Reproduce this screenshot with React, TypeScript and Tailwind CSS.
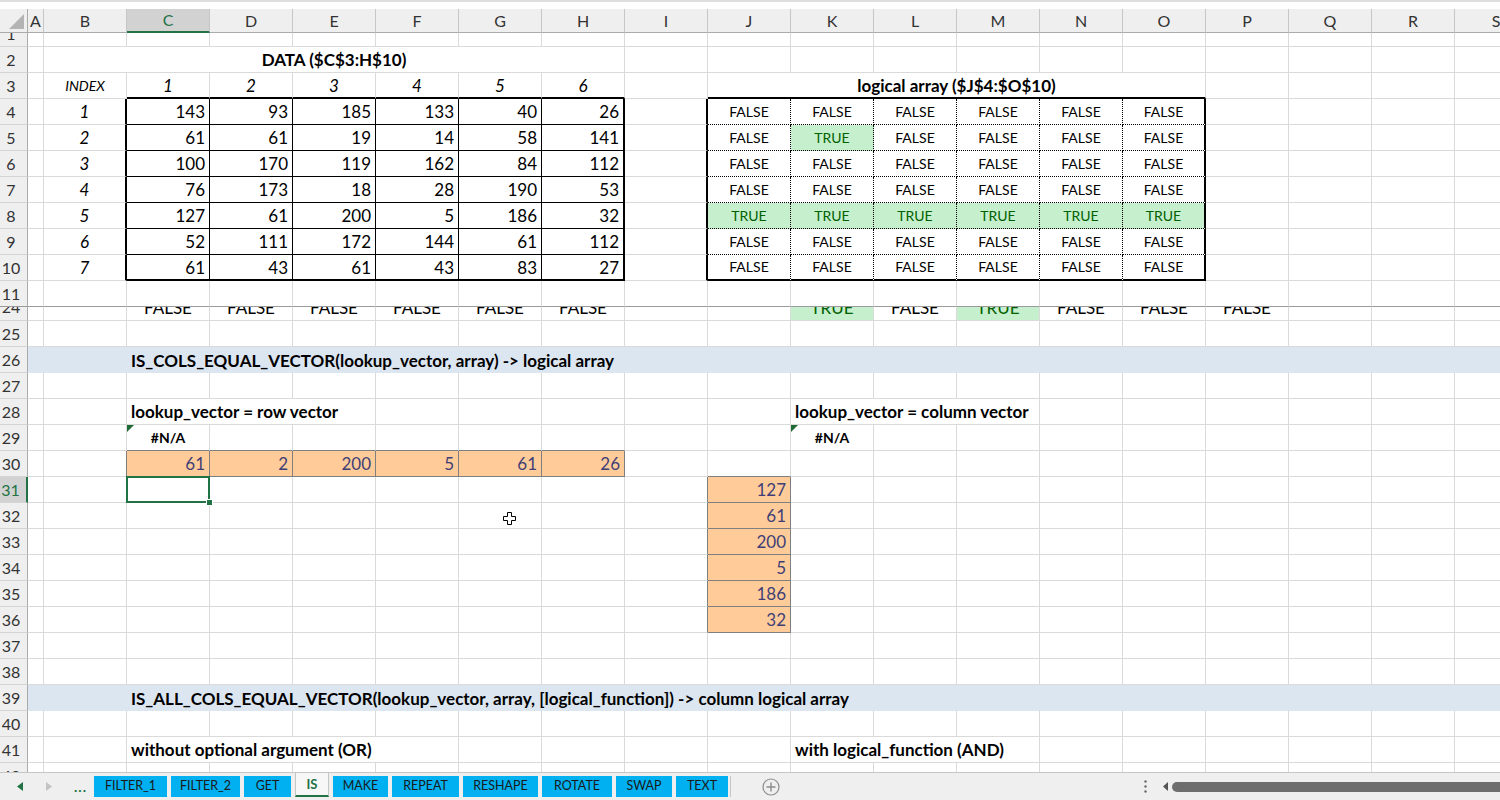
import type { ReactNode } from "react";
import { twMerge } from "tailwind-merge";

const COLS = ["A", "B", "C", "D", "E", "F", "G", "H", "I", "J", "K", "L", "M", "N", "O", "P", "Q", "R", "S"];

const WIDTH: Record<number, string> = {
  16: "w-[16px]",
  83: "w-[83px]",
  249: "w-[249px]",
  332: "w-[332px]",
  498: "w-[498px]",
  581: "w-[581px]",
};

const DATA_COLS = ["C", "D", "E", "F", "G", "H"];
const LOGIC_COLS = ["J", "K", "L", "M", "N", "O"];

const DATA = [
  [143, 93, 185, 133, 40, 26],
  [61, 61, 19, 14, 58, 141],
  [100, 170, 119, 162, 84, 112],
  [76, 173, 18, 28, 190, 53],
  [127, 61, 200, 5, 186, 32],
  [52, 111, 172, 144, 61, 112],
  [61, 43, 61, 43, 83, 27],
];

const COLUMN_VECTOR: Record<number, number> = { 31: 127, 32: 61, 33: 200, 34: 5, 35: 186, 36: 32 };
const ROW_VECTOR = [61, 2, 200, 5, 61, 26];

const BANDS: Record<number, string> = {
  26: "IS_COLS_EQUAL_VECTOR(lookup_vector, array) -> logical array",
  39: "IS_ALL_COLS_EQUAL_VECTOR(lookup_vector, array, [logical_function]) -> column logical array",
};

const ROWS = [1, 2, 3, 4, 5, 6, 7, 8, 9, 10, 11, 24, 25, 26, 27, 28, 29, 30, 31, 32, 33, 34, 35, 36, 37, 38, 39, 40, 41, 42];

type Cell = { v?: ReactNode; span?: number; box?: string; tx?: string; over?: ReactNode };

const INPUT_BOX = "bg-[#ffcc99] border-r-[#7f7f7f] border-b-[#7f7f7f]";
const INPUT_TX = "justify-end text-[#3f3f76]";

function ErrorMark() {
  return (
    <svg className="absolute left-0 top-0" width="7" height="7" viewBox="0 0 7 7" aria-hidden="true">
      <polygon points="0,0 7,0 0,7" fill="#1d6a36" />
    </svg>
  );
}

function buildRow(n: number): Record<string, Cell> {
  const r: Record<string, Cell> = {};

  if (n === 2) r.B = { span: 7, v: "DATA ($C$3:H$10)", tx: "justify-center font-bold" };

  if (n === 3) {
    r.B = { v: "INDEX", tx: "justify-center italic text-[14px]" };
    DATA_COLS.forEach((c, i) => {
      r[c] = { v: i + 1, box: "border-b-2 border-b-black", tx: "justify-center italic" };
    });
    r.J = {
      span: 6,
      v: "logical array ($J$4:$O$10)",
      box: "border-b-2 border-b-black",
      tx: "justify-center font-bold",
    };
  }

  if (n >= 4 && n <= 10) {
    const k = n - 4;
    const last = n === 10;
    r.B = { v: k + 1, box: "border-r-2 border-r-black", tx: "justify-center italic" };
    DATA_COLS.forEach((c, i) => {
      r[c] = {
        v: DATA[k][i],
        box: twMerge("border-r-black border-b-black", i === 5 && "border-r-2", last && "border-b-2"),
        tx: "justify-end",
      };
    });
    r.I = { box: "border-r-2 border-r-black" };
    LOGIC_COLS.forEach((c, i) => {
      const t = n === 8 || (n === 5 && c === "K");
      r[c] = {
        v: t ? "TRUE" : "FALSE",
        box: twMerge(
          "border-r-black border-b-black",
          i === 5 ? "border-r-2" : "[border-right-style:dotted]!",
          last ? "border-b-2" : "[border-bottom-style:dotted]!",
          t && "bg-[#c6efce]",
        ),
        tx: twMerge("justify-center text-[14px]", t && "text-[#006100]"),
      };
    });
  }

  if (n === 24) {
    DATA_COLS.forEach((c) => (r[c] = { v: "FALSE", tx: "justify-center" }));
    ["K", "L", "M", "N", "O", "P"].forEach((c) => {
      const t = c === "K" || c === "M";
      r[c] = {
        v: t ? "TRUE" : "FALSE",
        box: t ? "bg-[#c6efce]" : undefined,
        tx: twMerge("justify-center", t && "text-[#006100]"),
      };
    });
  }

  if (n === 28) {
    r.C = { span: 3, v: "lookup_vector = row vector", tx: "font-bold" };
    r.K = { span: 3, v: "lookup_vector = column vector", tx: "font-bold" };
  }

  if (n === 29) {
    DATA_COLS.forEach((c) => (r[c] = { box: "border-b-[#7f7f7f]" }));
    r.C = { v: "#N/A", box: "border-b-[#7f7f7f]", tx: "justify-center font-bold text-[14px]", over: <ErrorMark /> };
    r.K = { v: "#N/A", tx: "justify-center font-bold text-[14px]", over: <ErrorMark /> };
  }

  if (n === 30) {
    r.B = { box: "border-r-[#7f7f7f]" };
    DATA_COLS.forEach((c, i) => (r[c] = { v: ROW_VECTOR[i], box: INPUT_BOX, tx: INPUT_TX }));
    r.J = { box: "border-b-[#7f7f7f]" };
  }

  if (COLUMN_VECTOR[n] !== undefined) {
    r.I = { box: "border-r-[#7f7f7f]" };
    r.J = { v: COLUMN_VECTOR[n], box: INPUT_BOX, tx: INPUT_TX };
  }

  if (n === 31) {
    r.C = {
      over: (
        <div className="absolute left-[-1px] top-[-1px] right-[-1px] bottom-[-1px] z-10 border-2 border-[#217346]">
          <div className="absolute right-[-5px] bottom-[-5px] h-[7px] w-[7px] border border-white bg-[#217346]" />
        </div>
      ),
    };
  }

  if (n === 32) {
    r.G = {
      over: (
        <svg className="absolute left-[44px] top-[9px] z-10" width="13" height="13" viewBox="0 0 13 13" aria-hidden="true">
          <polygon
            points="4.5,0.5 8.5,0.5 8.5,4.5 12.5,4.5 12.5,8.5 8.5,8.5 8.5,12.5 4.5,12.5 4.5,8.5 0.5,8.5 0.5,4.5 4.5,4.5"
            fill="#fff"
            stroke="#000"
          />
        </svg>
      ),
    };
  }

  if (n === 41) {
    r.C = { span: 4, v: "without optional argument (OR)", tx: "font-bold" };
    r.K = { span: 3, v: "with logical_function (AND)", tx: "font-bold" };
  }

  return r;
}

function SheetRow({ n }: { n: number }) {
  const partial = n === 1 || n === 24;
  const shift = n === 1 ? "h-[26px] mt-[-12px]" : n === 24 ? "h-[26px] mt-[-13px]" : "h-full";
  const freeze = n === 11;
  const sel = n === 31;
  const band = BANDS[n];
  const cells = buildRow(n);

  const out: ReactNode[] = [];
  for (let i = 0; i < COLS.length; ) {
    const col = COLS[i];
    const c = cells[col] ?? {};
    const span = c.span ?? 1;
    const w = i === 0 ? 16 : span * 83;
    out.push(
      <div
        key={col}
        className={twMerge(
          "relative shrink-0 border-r border-b border-[#dadada]",
          WIDTH[w],
          partial && "overflow-hidden",
          freeze && "border-b-[#9a9a9a]",
          c.box,
        )}
      >
        <div className={twMerge("flex items-center whitespace-nowrap px-1 text-[17px] text-black", shift, c.tx)}>
          {c.v}
        </div>
        {c.over}
      </div>,
    );
    i += span;
  }

  return (
    <div className={twMerge("flex shrink-0", partial ? "h-[14px]" : "h-[26px]")}>
      <div
        className={twMerge(
          "w-[28px] shrink-0 overflow-hidden border-r border-b border-[#d4d4d4] border-r-[#ababab] bg-[#efefef]",
          freeze && "border-b-[#9a9a9a]",
          sel && "border-r-2 border-r-[#217346] bg-[#d2d2d2]",
        )}
      >
        <div
          className={twMerge(
            "flex items-center justify-center pr-[5px] text-[16px] text-[#333]",
            shift,
            sel && "text-[#217346]",
          )}
        >
          {n}
        </div>
      </div>
      {band ? (
        <div className="flex flex-1 items-center whitespace-nowrap bg-[#dce6f1] pl-[103px] text-[17px] font-bold text-black">
          {band}
        </div>
      ) : (
        out
      )}
    </div>
  );
}

function ColumnHeader() {
  return (
    <div className="flex h-[24px] shrink-0 bg-[#efefef]">
      <div className="relative w-[28px] shrink-0 border-r border-b border-[#ababab]">
        <svg className="absolute left-0 top-0" width="27" height="23" viewBox="0 0 27 23" aria-hidden="true">
          <polygon points="9,20 24,20 24,5" fill="#b4b4b4" />
        </svg>
      </div>
      {COLS.map((c) => (
        <div
          key={c}
          className={twMerge(
            "flex shrink-0 items-center justify-center border-r border-b border-[#c6c6c6] border-b-[#ababab] text-[16px] text-[#333]",
            c === "A" ? "w-[16px]" : "w-[83px]",
            c === "C" && "border-b-2 border-b-[#217346] bg-[#d2d2d2] text-[#217346]",
          )}
        >
          {c}
        </div>
      ))}
    </div>
  );
}

const TABS = [
  { t: "FILTER_1", w: "w-[73px]" },
  { t: "FILTER_2", w: "w-[69px]" },
  { t: "GET", w: "w-[47px]" },
  { t: "IS", w: "w-[34px]", active: true },
  { t: "MAKE", w: "w-[55px]" },
  { t: "REPEAT", w: "w-[67px]" },
  { t: "RESHAPE", w: "w-[75px]" },
  { t: "ROTATE", w: "w-[70px]" },
  { t: "SWAP", w: "w-[56px]" },
  { t: "TEXT", w: "w-[52px]" },
];

function TabBar() {
  return (
    <div className="flex h-[28px] shrink-0 items-stretch border-t border-[#c6c6c6] bg-[#efefef]">
      <div className="flex w-[94px] shrink-0 items-center">
        <svg className="ml-[17px]" width="6" height="9" viewBox="0 0 6 9" aria-hidden="true">
          <polygon points="6,0 6,9 0,4.5" fill="#217346" />
        </svg>
        <svg className="ml-[23px]" width="6" height="9" viewBox="0 0 6 9" aria-hidden="true">
          <polygon points="0,0 0,9 6,4.5" fill="#c3c3c3" />
        </svg>
        <span className="ml-[22px] text-[14px] font-bold leading-none tracking-[1px] text-[#217346]">...</span>
      </div>
      <div className="flex items-stretch gap-1 py-[3px]">
        {TABS.map((tab) =>
          tab.active ? (
            <div
              key={tab.t}
              className={twMerge(
                "mt-[-3px] flex items-center justify-center border-x border-b-2 border-x-[#c6c6c6] border-b-[#217346] bg-[#f7f7f7] text-[13px] font-bold text-[#217346]",
                tab.w,
              )}
            >
              {tab.t}
            </div>
          ) : (
            <div
              key={tab.t}
              className={twMerge("flex items-center justify-center bg-[#00b0f0] text-[12.5px] text-[#1a1a1a]", tab.w)}
            >
              {tab.t}
            </div>
          ),
        )}
      </div>
      <div className="my-[3px] ml-[2px] w-px bg-[#c6c6c6]" />
      <div className="flex items-center pl-[31px]">
        <svg width="18" height="18" viewBox="0 0 18 18" aria-hidden="true">
          <circle cx="9" cy="9" r="8" fill="none" stroke="#8c8c8c" strokeWidth="1.2" />
          <path d="M9 4.5v9M4.5 9h9" stroke="#8c8c8c" strokeWidth="1.4" />
        </svg>
      </div>
      <div className="flex-1" />
      <div className="flex w-[20px] items-center justify-center">
        <svg width="3" height="13" viewBox="0 0 3 13" aria-hidden="true">
          <circle cx="1.5" cy="1.5" r="1.2" fill="#6a6a6a" />
          <circle cx="1.5" cy="6.5" r="1.2" fill="#6a6a6a" />
          <circle cx="1.5" cy="11.5" r="1.2" fill="#6a6a6a" />
        </svg>
      </div>
      <div className="flex w-[345px] items-center">
        <svg className="ml-[8px]" width="5" height="9" viewBox="0 0 5 9" aria-hidden="true">
          <polygon points="5,0 5,9 0,4.5" fill="#555" />
        </svg>
        <div className="ml-[4px] h-[10px] flex-1 rounded-l-full bg-[#6e6e6e]" />
      </div>
    </div>
  );
}

export default function App() {
  return (
    <div className="flex h-[800px] w-[1500px] flex-col overflow-hidden bg-white font-[family-name:Lato,sans-serif] leading-none">
      <div className="h-[9px] shrink-0 border-t-2 border-[#dedede] bg-white" />
      <ColumnHeader />
      <div className="flex min-h-0 flex-1 flex-col overflow-hidden">
        {ROWS.map((n) => (
          <SheetRow key={n} n={n} />
        ))}
      </div>
      <TabBar />
    </div>
  );
}
